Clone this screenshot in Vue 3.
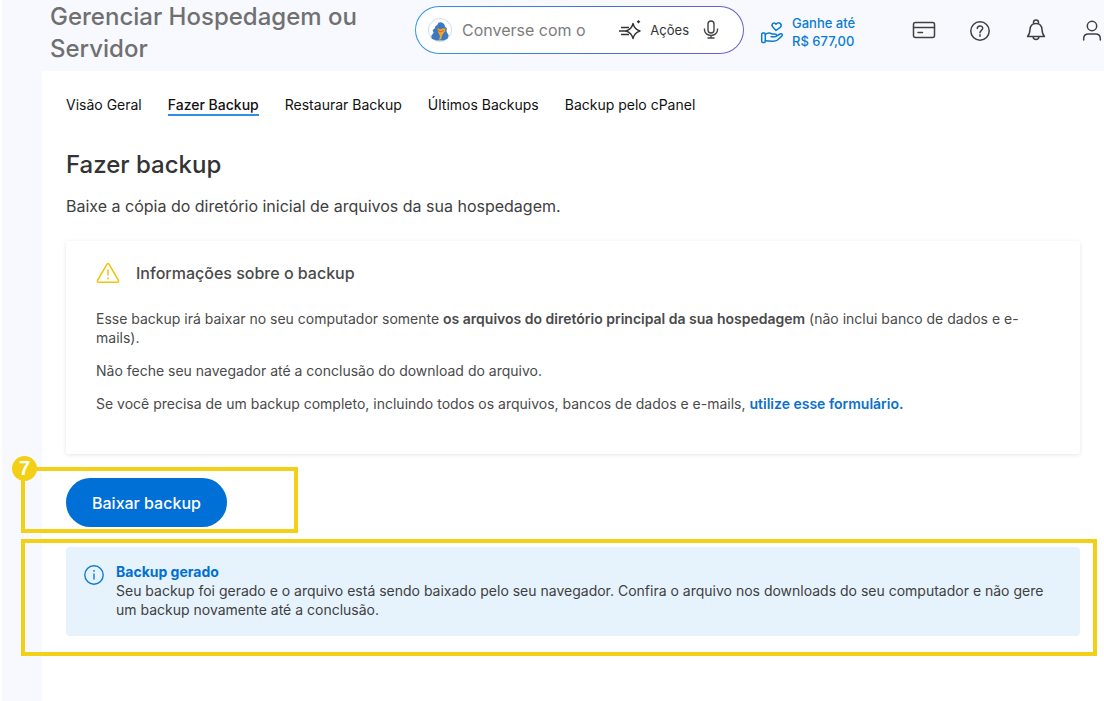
<script setup>
const tabs = ['Visão Geral', 'Fazer Backup', 'Restaurar Backup', 'Últimos Backups', 'Backup pelo cPanel']
const active = 'Fazer Backup'
</script>

<template>
  <div class="page">
    <header class="topbar">
      <h1 class="title">Gerenciar Hospedagem ou Servidor</h1>

      <form class="chat" @submit.prevent>
        <svg class="mascot" viewBox="0 0 26 26" aria-hidden="true">
          <circle cx="13" cy="13" r="12.5" fill="#fff" stroke="#cfd9e2" />
          <path d="M8 9L10 7.500 11.500 5 14.500 4.500 17.500 6.500 18.500 9.500 20.500 11 20 14 21 16.500 22.500 19 21 22.500 17 24.500 9 24.500 4 22.500 3.500 19.500 6 16 5 13 7.500 11Z" fill="#3b79c3" />
          <path d="M10.500 10.500L13 12.500 15.500 11.500 19 11 18.500 14.500 16.500 16.500 15 19.500 14.500 22.500 12 24 13 19.500 11 15.500Z" fill="#f9a51f" />
          <path d="M10 12.500L13 15 17.500 13.500" fill="none" stroke="#dc6b25" stroke-width="1.200" />
        </svg>
        <input class="chat-input" type="text" placeholder="Converse com o" aria-label="Converse com o" />
        <button class="actions" type="button">
          <svg width="24" height="24" viewBox="0 0 24 24" fill="none" stroke="#333" stroke-width="1.4" stroke-linejoin="round" aria-hidden="true">
            <path d="M15 5.500C16 9.600 17.400 11.500 22 13C17.400 14.500 16 16.400 15 20.500C14 16.400 12.600 14.500 8 13C12.600 11.500 14 9.600 15 5.500Z" />
            <path d="M3 9.500h8M1 13h7M3 16.500h8" />
            <path d="M20.500 2l1.800 1.800-1.800 1.800-1.800-1.800z" fill="#333" stroke="none" />
          </svg>
          <span>Ações</span>
        </button>
        <button class="mic" type="button" aria-label="Microfone">
          <svg width="16" height="20" viewBox="0 0 16 20" fill="none" stroke="#444" stroke-width="1.400" aria-hidden="true">
            <rect x="5" y="1" width="6" height="12" rx="3" />
            <path d="M1.500 8.500v1.500a6.500 5.500 0 0 0 13 0V8.500M8 15.500V18M4.500 18h7" />
          </svg>
        </button>
      </form>

      <a class="promo" href="#">
        <svg width="24" height="24" viewBox="0 0 24 24" fill="none" stroke="#0a7cd0" stroke-width="1.500" stroke-linejoin="round" stroke-linecap="round" aria-hidden="true">
          <path d="M16 10.500L12.600 6.800C10.800 4.300 13.800 1.400 16 4.200C19 1 22.500 4.200 20.500 7.200Z" />
          <rect x="1.700" y="13" width="3.600" height="9.500" rx="1" />
          <path d="M5.300 14.500C7.500 12.700 10 12.700 12 14H15C17 14 17 16.800 15 16.800H11M16.500 16L20 14C22 13 23.200 15 21.500 16.400L17.500 20C16 21.200 14.500 21.400 12 21.200L5.300 20.800" />
        </svg>
        <span>Ganhe até<br />R$ 677,00</span>
      </a>

      <nav class="tools" aria-label="Conta">
        <button type="button" aria-label="Pagamentos">
          <svg width="24" height="24" viewBox="0 0 24 24" aria-hidden="true">
            <rect x="1.500" y="4.500" width="21" height="15" rx="2" />
            <path d="M1.500 9.500h21M6 14.500h4.500" />
          </svg>
        </button>
        <button type="button" aria-label="Ajuda">
          <svg width="24" height="24" viewBox="0 0 24 24" aria-hidden="true">
            <circle cx="12" cy="13" r="9.200" />
            <path d="M9.300 10.600c0-3.600 5.400-3.500 5.400-.3 0 2-2.700 2.100-2.700 4.400M12 16.800v1.500" />
          </svg>
        </button>
        <button type="button" aria-label="Notificações">
          <svg width="24" height="24" viewBox="0 0 24 24" aria-hidden="true">
            <path d="M3.500 18.500h17c-1.800-1.700-2.300-3.300-2.500-7C17.700 7.500 15.500 5.500 12 5.500S6.300 7.500 6 11.500c-.2 3.700-.7 5.300-2.500 7zM9.500 5.700V4.500a2.500 2.500 0 0 1 5 0v1.200M9 18.700c.3 3.700 5.700 3.700 6 0" />
          </svg>
        </button>
        <button type="button" aria-label="Perfil">
          <svg width="24" height="24" viewBox="0 0 24 24" aria-hidden="true">
            <circle cx="12" cy="8" r="4.700" />
            <path d="M3.700 22v-1.500c0-3 2-4.500 4.800-4.500h7c2.800 0 4.800 1.500 4.800 4.500V22" />
          </svg>
        </button>
      </nav>
    </header>

    <main class="content">
      <nav class="tabs" aria-label="Backup">
        <a v-for="t in tabs" :key="t" href="#" :class="['tab', { active: t === active }]">{{ t }}</a>
      </nav>

      <h2 class="heading">Fazer backup</h2>
      <p class="lead">Baixe a cópia do diretório inicial de arquivos da sua hospedagem.</p>

      <section class="card">
        <h3 class="card-title">
          <svg width="24" height="22" viewBox="0 0 24 22" fill="none" stroke="#f0c40f" stroke-width="1.500" stroke-linejoin="round" aria-hidden="true">
            <path d="M11 2.200q1-1.400 2 0L22.500 18.500q.5 1.700-1 1.700H2.500q-1.500 0-1-1.700Z" />
            <path d="M12 7.500v6M12 15.500v2" />
          </svg>
          <span>Informações sobre o backup</span>
        </h3>
        <p>Esse backup irá baixar no seu computador somente <strong>os arquivos do diretório principal da sua hospedagem</strong> (não inclui banco de dados e e-mails).</p>
        <p>Não feche seu navegador até a conclusão do download do arquivo.</p>
        <p>Se você precisa de um backup completo, incluindo todos os arquivos, bancos de dados e e-mails, <a href="#">utilize esse formulário.</a></p>
      </section>

      <div class="step">
        <span class="frame frame-step"></span>
        <span class="badge">7</span>
        <button class="download" type="button">Baixar backup</button>
      </div>

      <div class="result">
        <span class="frame frame-result"></span>
        <div class="alert" role="status">
          <svg width="20" height="20" viewBox="0 0 20 20" fill="none" stroke="#0a7cd8" stroke-width="1.400" aria-hidden="true">
            <circle cx="10" cy="10" r="9.200" />
            <path d="M10 8.500v6M10 5v1.800" />
          </svg>
          <div>
            <strong>Backup gerado</strong>
            <p>Seu backup foi gerado e o arquivo está sendo baixado pelo seu navegador. Confira o arquivo nos downloads do seu computador e não gere um backup novamente até a conclusão.</p>
          </div>
        </div>
      </div>
    </main>
  </div>
</template>

<style>
body {
  margin: 0;
  background: #fff;
}
</style>

<style scoped>
* {
  box-sizing: border-box;
}
.page {
  min-height: 100vh;
  margin-left: 2px;
  background: #f8f9ff;
  display: flex;
  flex-direction: column;
  font-family: Inter, "Liberation Sans", sans-serif;
  color: #333;
}
h1, h2, h3, p {
  margin: 0;
}
button {
  font: inherit;
  color: inherit;
  border: 0;
  padding: 0;
  background: none;
  cursor: pointer;
}
a {
  text-decoration: none;
}
svg {
  display: block;
  flex: none;
}
.topbar {
  display: flex;
  align-items: flex-start;
  min-height: 71px;
  padding-left: 48px;
}
.title {
  flex: 0 0 340px;
  margin-right: 25px;
  padding-top: 1px;
  font-size: 24px;
  line-height: 32px;
  font-weight: 500;
  color: #707070;
}
.chat {
  flex: 0 0 329px;
  min-width: 0;
  height: 48px;
  margin-top: 6px;
  display: flex;
  align-items: center;
  padding: 0 24px 0 12px;
  border: 1px solid transparent;
  border-radius: 24px;
  background: linear-gradient(#fff, #fff) padding-box, linear-gradient(90deg, #2f97e8, #4a6fd0 60%, #6a5fd0) border-box;
}
.mascot {
  width: 24px;
  height: 24px;
}
.chat-input {
  flex: 1;
  width: 0;
  min-width: 0;
  margin: 0 16px 0 10px;
  padding: 0;
  border: 0;
  outline: 0;
  background: none;
  font: 400 16px/24px Inter, "Liberation Sans", sans-serif;
}
.chat-input::placeholder {
  color: #7d7d7d;
  opacity: 1;
}
.actions {
  display: flex;
  align-items: center;
  gap: 8px;
  font-size: 13px;
}
.mic {
  margin-left: 14px;
}
.promo {
  display: flex;
  align-items: center;
  flex: none;
  gap: 8px;
  margin: 14px 0 0 16px;
  font-size: 13px;
  line-height: 18px;
  font-weight: 500;
  color: #0a7cd0;
}
.tools {
  display: flex;
  gap: 32px;
  margin: 18px 0 0 auto;
}
.tools svg {
  fill: none;
  stroke: #404040;
  stroke-width: 1.5;
  stroke-linejoin: round;
  stroke-linecap: round;
}
.content {
  flex: 1;
  margin-left: 40px;
  padding: 24px 24px 40px;
  background: #fff;
}
.tabs {
  display: flex;
  gap: 26px;
}
.tab {
  height: 21px;
  font-size: 14px;
  line-height: 20px;
  color: #111;
}
.tab.active {
  font-weight: 500;
  line-height: 19px;
  border-bottom: 2px solid #2f8fe8;
}
.heading {
  margin-top: 33px;
  font-size: 24px;
  line-height: 32px;
  font-weight: 500;
}
.lead {
  margin-top: 13px;
  font-size: 16px;
  line-height: 24px;
  color: #404040;
}
.card {
  margin-top: 23px;
  padding: 20px 30px 41px;
  border-radius: 2px;
  box-shadow: 0 1px 4px rgba(0, 0, 0, 0.1);
  font-size: 14px;
  line-height: 19px;
  color: #4a4a4a;
}
.card-title {
  display: flex;
  align-items: center;
  gap: 16px;
  margin-bottom: 24px;
  font-size: 16px;
  line-height: 24px;
  font-weight: 500;
}
.card p + p {
  margin-top: 14px;
}
.card strong {
  font-weight: 600;
}
.card a {
  font-weight: 600;
  color: #0a70cc;
}
.step {
  position: relative;
  margin-top: 24px;
}
.download {
  display: block;
  height: 49px;
  padding: 0 26px;
  border-radius: 25px;
  background: #006fd6;
  color: #fff;
  font-size: 16px;
  font-weight: 500;
}
.frame {
  position: absolute;
  border: 4px solid #f3d016;
  pointer-events: none;
}
.frame-step {
  top: -11px;
  bottom: -6px;
  left: -45px;
  width: 277px;
}
.frame-result {
  inset: -8px -17px -20px -45px;
}
.badge {
  position: absolute;
  top: -22px;
  left: -54px;
  width: 25px;
  height: 25px;
  border-radius: 50%;
  background: #f3d016;
  color: #fff;
  font: 700 20px/25px "Liberation Sans", sans-serif;
  text-align: center;
}
.result {
  position: relative;
  margin-top: 20px;
}
.alert {
  display: flex;
  gap: 12px;
  padding: 15px 18px 17px;
  border-radius: 4px;
  background: #e6f3fd;
  font-size: 14px;
  line-height: 19px;
  color: #404040;
}
.alert svg {
  margin-top: 3px;
}
.alert strong {
  display: block;
  font-weight: 700;
  color: #0070d2;
}
</style>
